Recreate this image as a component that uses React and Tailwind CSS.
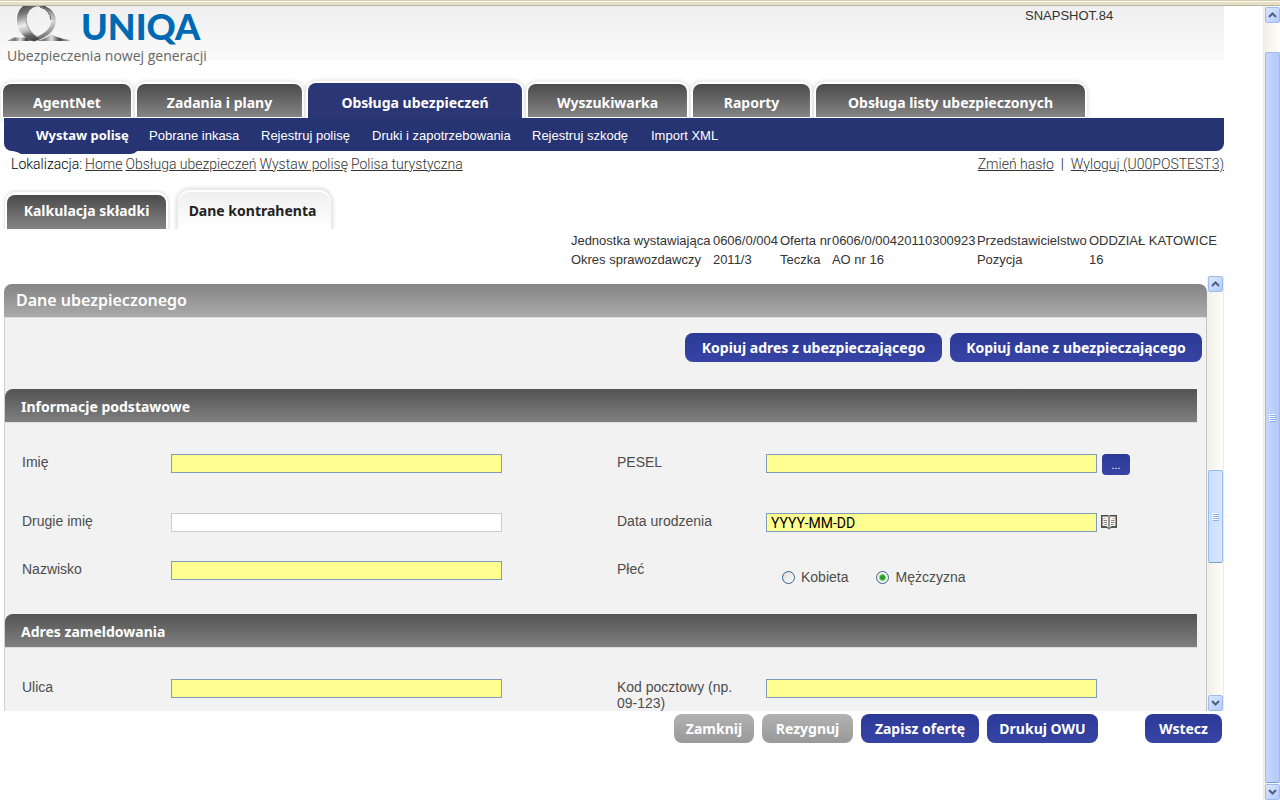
import React from "react";

const mainTabs = [
  { label: "AgentNet", width: "w-[128px]" },
  { label: "Zadania i plany", width: "w-[165px]" },
  { label: "Obsługa ubezpieczeń", width: "w-[214px]", active: true },
  { label: "Wyszukiwarka", width: "w-[159px]" },
  { label: "Raporty", width: "w-[117px]" },
  { label: "Obsługa listy ubezpieczonych", width: "w-[269px]" },
];

const subLinks = [
  { label: "Pobrane inkasa", width: "w-[112px]" },
  { label: "Rejestruj polisę", width: "w-[111px]" },
  { label: "Druki i zapotrzebowania", width: "w-[160px]" },
  { label: "Rejestruj szkodę", width: "w-[119px]" },
  { label: "Import XML", width: "w-[80px]" },
];

const crumbs = ["Home", "Obsługa ubezpieczeń", "Wystaw polisę", "Polisa turystyczna"];

function LogoMark() {
  return (
    <svg width="66" height="38" viewBox="0 0 66 38" className="shrink-0" aria-hidden="true">
      <defs>
        <linearGradient id="ringLeft" x1=".4" y1="0" x2=".6" y2="1">
          <stop offset="0" stopColor="#555" />
          <stop offset=".18" stopColor="#777" />
          <stop offset=".32" stopColor="#aaa" />
          <stop offset=".5" stopColor="#ededed" />
          <stop offset=".68" stopColor="#bbb" />
          <stop offset=".82" stopColor="#666" />
          <stop offset="1" stopColor="#444" />
        </linearGradient>
        <linearGradient id="ringRight" x1="0" y1="0" x2="0" y2="1">
          <stop offset="0" stopColor="#444" />
          <stop offset=".2" stopColor="#999" />
          <stop offset=".45" stopColor="#d6d6d6" />
          <stop offset=".75" stopColor="#999" />
          <stop offset="1" stopColor="#666" />
        </linearGradient>
        <linearGradient id="base" x1="0" y1="0" x2="1" y2="0">
          <stop offset="0" stopColor="#aaa" />
          <stop offset=".3" stopColor="#777" />
          <stop offset=".5" stopColor="#ddd" />
          <stop offset=".72" stopColor="#444" />
          <stop offset="1" stopColor="#bbb" />
        </linearGradient>
      </defs>
      <path d="M0 35 L7 31.500 H21 L27 35 Z" fill="url(#base)" />
      <path d="M26 35 Q38 34 44 28 Q50 32 63 34 L62 35 Z" fill="url(#base)" />
      <path d="M30 0 H38 Q49 5 49 15 Q48 28 31 34 L26 32 Q43 27 45 14 Q44 5 35 1 Z" fill="url(#ringRight)" />
      <path d="M16 0 H31 Q20 2 19 13 Q19 25 33 33 L27 35.500 Q10 30 10 14 Q10 5 16 0 Z" fill="url(#ringLeft)" />
      <path d="M22 5 Q19 9 19 14 Q20 25 32 32" fill="none" stroke="#888" strokeWidth=".8" />
      <path d="M33 1 Q43 4 44 14" fill="none" stroke="#555" strokeWidth="1" />
    </svg>
  );
}

function Arrow({ up }) {
  return (
    <svg width="9" height="6" viewBox="0 0 9 6" aria-hidden="true">
      <path d={up ? "M1 5 L4.5 1.5 L8 5" : "M1 1 L4.5 4.5 L8 1"} fill="none" stroke="#4d6185" strokeWidth="2" />
    </svg>
  );
}

function ScrollButton({ up }) {
  return (
    <button
      type="button"
      aria-label={up ? "Przewiń w górę" : "Przewiń w dół"}
      className="flex h-4 w-full shrink-0 items-center justify-center rounded-xs border border-[#9ebbf0] bg-gradient-to-br from-[#dbe6ff] to-[#b4ccfa]"
    >
      <Arrow up={up} />
    </button>
  );
}

function Grip() {
  return (
    <svg width="7" height="8" viewBox="0 0 7 8" aria-hidden="true" className="shrink-0">
      <path d="M0 .5 H6 M0 2.500 H6 M0 4.500 H6 M0 6.500 H6" stroke="#fff" />
      <path d="M1 1.500 H7 M1 3.500 H7 M1 5.500 H7 M1 7.500 H7" stroke="#8cb0f8" />
    </svg>
  );
}

function Tab({ label, width, active }) {
  return (
    <a
      href="#"
      className={
        "flex shrink-0 items-center justify-center whitespace-nowrap rounded-t-lg text-sm font-bold text-white shadow-[0_0_0_2px_#fff,0_0_4px_3px_#e2e2e2] " +
        width +
        (active
          ? " h-[35px] bg-[#2b3674] pt-1"
          : " mb-px h-[33px] bg-gradient-to-b from-[#4b4b4b] to-[#858585] pt-1")
      }
    >
      {label}
    </a>
  );
}

function SectionHeader({ children }) {
  return (
    <h3 className="mr-[9px] flex h-[33px] shrink-0 items-center rounded-tl-lg bg-gradient-to-b from-[#545454] to-[#808080] pl-4 pt-[2px] font-['Noto_Sans',sans-serif] text-sm font-bold text-white shadow-[0_1px_0_#ddd]">
      {children}
    </h3>
  );
}

function TextField({ id, label, required, value, children }) {
  return (
    <div className="flex items-start">
      <label htmlFor={id} className="w-[149px] shrink-0 pr-6 leading-4">
        {label}
      </label>
      <input
        id={id}
        type="text"
        defaultValue={value}
        className={
          "h-[19px] w-[331px] min-w-0 border px-1 font-[Roboto,sans-serif] text-sm text-black outline-none " +
          (required ? "border-[#7f9db9] bg-[#ffff91]" : "border-[#ccc] bg-white")
        }
      />
      {children}
    </div>
  );
}

function FormRow({ children, height }) {
  return <div className={"grid shrink-0 grid-cols-[595px_minmax(0,1fr)] pl-[17px] " + height}>{children}</div>;
}

function ActionButton({ children, disabled, width }) {
  return (
    <button
      type="button"
      disabled={disabled}
      className={
        "flex h-[29px] shrink-0 items-center justify-center whitespace-nowrap rounded-lg font-['Noto_Sans',sans-serif] text-sm font-bold text-white " +
        width +
        (disabled
          ? " bg-gradient-to-b from-[#b2b2b2] to-[#999]"
          : " bg-gradient-to-b from-[#2b3997] to-[#3744a5]")
      }
    >
      {children}
    </button>
  );
}

function BookIcon() {
  return (
    <svg width="16" height="15" viewBox="0 0 16 15" aria-hidden="true">
      <path d="M0 0 H16 V13 H10 L8 14.5 L6 13 H0 Z" fill="#4a4a4a" />
      <path d="M1.500 1.500 H7 V12.500 L5 11 H1.500 Z M9 1.500 H14.500 V11 H11 L9 12.500 Z" fill="#f7f3ec" />
      <path d="M2.500 5.500 H6 M2.500 7.500 H6 M3.500 9.500 H6 M10 5.500 H13.500 M10 7.500 H13.500 M10 9.500 H12.500" stroke="#888" />
      <path d="M8 0 V13.500" stroke="#e4e4e4" />
      <path d="M2 3.500 H4.500 M11.500 3.500 H14" stroke="#e8a890" />
      <path d="M0 12.500 H4 M12 12.500 H16" stroke="#486b48" />
    </svg>
  );
}

function Radio({ label, checked }) {
  return (
    <label className="flex items-center gap-[6px]">
      <input
        type="radio"
        name="plec"
        defaultChecked={checked}
        className="m-0 size-[13px] appearance-none rounded-full border border-[#33628f] bg-gradient-to-br from-[#dcdcd7] to-white checked:bg-[radial-gradient(circle,#21a121_0_2px,#7fd07f_3px,#f4f4f0_4px)]"
      />
      {label}
    </label>
  );
}

export default function App() {
  return (
    <div className="flex h-screen flex-col overflow-hidden bg-white font-['Liberation_Sans',Arial,sans-serif] text-sm text-[#4d4d4d]">
      <div className="h-[6px] shrink-0 border-b border-[#b9b6a4] bg-[linear-gradient(#d6cdb0_0_1px,#fdfbf0_1px_2px,#e6dfc6_2px)]" />
      <div className="flex min-h-0 flex-1">
        <main className="flex min-w-0 flex-1 flex-col pr-[39px]">
          <header className="flex h-[72px] shrink-0 items-start justify-between bg-[linear-gradient(#efefef,#fafafa_54px,#fff_54px)]">
            <a href="#" className="flex flex-col pl-[7px]">
              <span className="flex items-start gap-2">
                <LogoMark />
                <span className="py-[2px] font-[Lato,sans-serif] text-4xl font-black leading-9 text-[#0069b4]">
                  UNIQA
                </span>
              </span>
              <span className="font-['Open_Sans',sans-serif] text-sm leading-5 text-[#666]">
                Ubezpieczenia nowej generacji
              </span>
            </a>
            <span className="w-[199px] pt-[2px] text-[13px] leading-4 text-[#333]">SNAPSHOT.84</span>
          </header>

          <nav className="flex h-[40px] shrink-0 items-end gap-[6px] pl-[3px] font-['Noto_Sans',sans-serif]">
            {mainTabs.map((t) => (
              <Tab key={t.label} {...t} />
            ))}
          </nav>
          <nav className="relative ml-1 flex h-[33px] shrink-0 items-center rounded-b-lg bg-[#273474] pl-8 text-[13px] text-white">
            <svg
              className="absolute left-0 top-[27px]"
              width="134"
              height="9"
              viewBox="0 0 134 9"
              aria-hidden="true"
            >
              <path d="M0 0 H134 V5 Q131 9 126 9 H17 L13 7 Q6 6 0 0 Z" fill="#273474" />
            </svg>
            <a href="#" className="relative w-[113px] shrink-0 pt-[2px] font-['Noto_Sans',sans-serif] font-bold">
              Wystaw polisę
            </a>
            {subLinks.map((l) => (
              <a key={l.label} href="#" className={"shrink-0 whitespace-nowrap pt-[3px] " + l.width}>
                {l.label}
              </a>
            ))}
          </nav>

          <div className="flex h-[26px] shrink-0 items-center justify-between pl-[11px] font-[Roboto,sans-serif] font-light leading-4 text-[#333]">
            <div className="flex gap-[3px]">
              <span className="text-black">Lokalizacja:</span>
              {crumbs.map((c) => (
                <a key={c} href="#" className="underline">
                  {c}
                </a>
              ))}
            </div>
            <div className="flex">
              <a href="#" className="underline">Zmień hasło</a>
              <span className="w-[17px] text-center text-black">|</span>
              <a href="#" className="underline">Wyloguj (U00POSTEST3)</a>
            </div>
          </div>

          <div className="flex h-[52px] shrink-0 items-end gap-3 pl-[7px] font-['Noto_Sans',sans-serif] text-sm font-bold">
            <a
              href="#"
              className="flex h-[34px] w-[159px] items-center justify-center rounded-t-lg bg-gradient-to-b from-[#4b4b4b] to-[#858585] pb-[2px] text-white shadow-[0_-1px_0_2px_#fff,0_-1px_3px_3px_#e2e2e2]"
            >
              Kalkulacja składki
            </a>
            <a
              href="#"
              className="flex h-[39px] w-[153px] items-center justify-center rounded-t-xl bg-gradient-to-b from-[#eee] to-white pr-1 pt-[2px] text-[#222] shadow-[inset_0_2px_0_#fff,0_0_3px_3px_#e9e9e9]"
            >
              Dane kontrahenta
            </a>
          </div>

          <div className="z-10 flex h-[47px] shrink-0 justify-end bg-white pr-[7px] pt-[3px] text-[13px] text-[#333]">
            <table className="h-[38px] table-fixed border-collapse text-left">
              <tbody>
                <tr className="h-[19px]">
                  <th className="w-[142px] whitespace-nowrap p-0 font-normal">Jednostka wystawiająca</th>
                  <td className="w-[67px] whitespace-nowrap p-0">0606/0/004</td>
                  <th className="w-[52px] whitespace-nowrap p-0 font-normal">Oferta nr</th>
                  <td className="w-[145px] whitespace-nowrap p-0">0606/0/00420110300923</td>
                  <th className="w-[112px] whitespace-nowrap p-0 font-normal">Przedstawicielstwo</th>
                  <td className="w-[128px] whitespace-nowrap p-0">ODDZIAŁ KATOWICE</td>
                </tr>
                <tr className="h-[19px]">
                  <th className="p-0 font-normal">Okres sprawozdawczy</th>
                  <td className="p-0">2011/3</td>
                  <th className="p-0 font-normal">Teczka</th>
                  <td className="p-0">AO nr 16</td>
                  <th className="p-0 font-normal">Pozycja</th>
                  <td className="p-0">16</td>
                </tr>
              </tbody>
            </table>
          </div>

          <div className="flex h-[435px] min-h-0 shrink-0">
            <section className="ml-1 flex min-w-0 flex-1 flex-col overflow-hidden pt-2">
              <h2 className="flex h-[33px] shrink-0 items-center rounded-t-lg bg-gradient-to-b from-[#858585] to-[#aaa] pb-px pl-3 font-['Noto_Sans',sans-serif] text-base font-semibold text-white">
                Dane ubezpieczonego
              </h2>
              <div className="flex shrink-0 flex-col border-x border-t border-l-[#d0d0d0] border-r-[#c4c4c4] border-t-[#ddd] bg-[#f2f2f2]">
                <div className="flex h-[71px] shrink-0 justify-end gap-2 pr-1 pt-[15px]">
                  <ActionButton width="w-[257px]">Kopiuj adres z ubezpieczającego</ActionButton>
                  <ActionButton width="w-[252px]">Kopiuj dane z ubezpieczającego</ActionButton>
                </div>
                <SectionHeader>Informacje podstawowe</SectionHeader>
                <form className="flex flex-col pt-8">
                  <FormRow height="h-[59px]">
                    <TextField id="imie" label="Imię" required />
                    <TextField id="pesel" label="PESEL" required>
                      <button
                        type="button"
                        aria-label="Szukaj PESEL"
                        className="ml-[5px] h-[21px] w-7 shrink-0 rounded-sm bg-gradient-to-b from-[#2b3997] to-[#3744a5] text-[11px] leading-5 text-white"
                      >
                        ...
                      </button>
                    </TextField>
                  </FormRow>
                  <FormRow height="h-12">
                    <TextField id="drugie" label="Drugie imię" />
                    <TextField id="data" label="Data urodzenia" required value="YYYY-MM-DD">
                      <button type="button" aria-label="Kalendarz" className="ml-1 mt-[2px] shrink-0">
                        <BookIcon />
                      </button>
                    </TextField>
                  </FormRow>
                  <FormRow height="h-[53px]">
                    <TextField id="nazwisko" label="Nazwisko" required />
                    <fieldset className="flex items-start">
                      <legend className="float-left w-[165px] leading-4">Płeć</legend>
                      <div className="flex gap-7 pt-2 leading-4">
                        <Radio label="Kobieta" />
                        <Radio label="Mężczyzna" checked />
                      </div>
                    </fieldset>
                  </FormRow>
                </form>
                <SectionHeader>Adres zameldowania</SectionHeader>
                <form className="flex flex-col pt-8">
                  <FormRow height="h-[59px]">
                    <TextField id="ulica" label="Ulica" required />
                    <TextField id="kod" label="Kod pocztowy (np. 09-123)" required />
                  </FormRow>
                </form>
              </div>
            </section>
            <div className="flex w-[17px] shrink-0 flex-col border-r border-[#eeeddc] bg-gradient-to-r from-[#f1efe6] to-[#fefefb] pl-px">
              <ScrollButton up />
              <div className="flex flex-1 flex-col pt-[178px]">
                <div className="flex h-[93px] items-center justify-center rounded-xs border border-[#98bdf0] border-b-[#7a9fd8] bg-gradient-to-r from-[#c9dfff] to-[#d6e7ff]">
                  <Grip />
                </div>
              </div>
              <ScrollButton />
            </div>
          </div>

          <footer className="flex shrink-0 items-start justify-end gap-2 pr-[2px] pt-[3px]">
            <ActionButton disabled width="w-20">Zamknij</ActionButton>
            <ActionButton disabled width="w-[91px]">Rezygnuj</ActionButton>
            <ActionButton width="w-[118px]">Zapisz ofertę</ActionButton>
            <ActionButton width="w-[111px]">Drukuj OWU</ActionButton>
            <div className="ml-[39px]">
              <ActionButton width="w-[77px]">Wstecz</ActionButton>
            </div>
          </footer>
        </main>

        <div className="flex w-[17px] shrink-0 flex-col gap-px border-l border-[#eeeddc] bg-gradient-to-r from-[#f1efe6] to-[#fefefb] pl-px pt-px">
          <ScrollButton up />
          <div className="flex min-h-0 flex-1 pt-7">
            <div className="flex w-full items-center justify-center rounded-xs border border-[#9ebbf0] border-b-[#7a9fd8] bg-gradient-to-r from-[#c6d6fd] to-[#b5cafa]">
              <Grip />
            </div>
          </div>
          <ScrollButton />
        </div>
      </div>
    </div>
  );
}
